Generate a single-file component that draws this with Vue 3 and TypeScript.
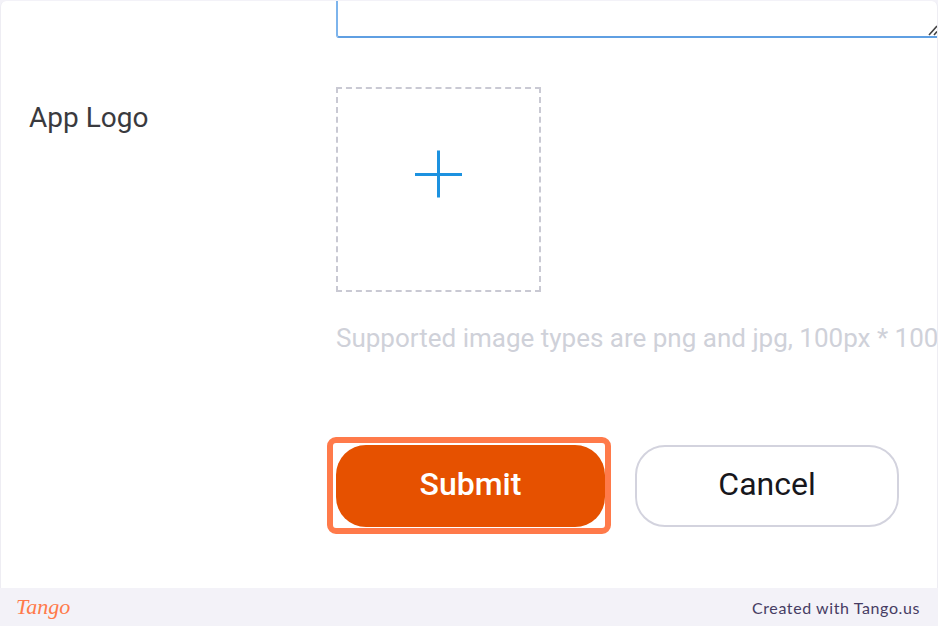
<script setup lang="ts">
const hint: string = 'Supported image types are png and jpg, 100px * 100px'
</script>

<template>
  <div class="page">
    <main class="card">
      <div class="field-tail">
        <div class="textarea">
          <svg class="grip" width="10" height="12" viewBox="0 0 10 12">
            <path d="M1 11 L9 2 M6 11 L9 7.5" stroke="#444" stroke-width="1.6" fill="none" />
          </svg>
        </div>
      </div>
      <section class="row logo-row">
        <div class="label">App Logo</div>
        <div class="control">
          <div class="upload">
            <svg width="50" height="50" viewBox="0 0 50 50">
              <path d="M24.5 1.5 V48.5 M1 25.5 H48" stroke="#1c92e0" stroke-width="3" fill="none" />
            </svg>
          </div>
          <p class="hint">{{ hint }}</p>
        </div>
      </section>
      <div class="actions">
        <button class="btn primary" type="button">
          Submit
          <span class="highlight"></span>
        </button>
        <button class="btn ghost" type="button">Cancel</button>
      </div>
    </main>
    <footer class="footer">
      <span class="logo">Tango</span>
      <span class="credit">Created with Tango.us</span>
    </footer>
  </div>
</template>

<style>
html, body { margin: 0; background: #f3f2f8; }
</style>

<style scoped>
.page {
  width: 938px;
  height: 626px;
  display: flex;
  flex-direction: column;
  overflow: hidden;
  font-family: Roboto, "Liberation Sans", sans-serif;
  background: #f3f2f8;
}
.card {
  height: 587px;
  margin-top: 1px;
  box-sizing: border-box;
  background: #fff;
  border-left: 1px solid #eeedf3;
  border-right: 1px solid #eeedf3;
  border-radius: 6px 6px 0 0;
  overflow: hidden;
}
.field-tail { padding-left: 335px; height: 37px; }
.textarea {
  position: relative;
  box-sizing: border-box;
  height: 37px;
  width: 640px;
  border-left: 2px solid #7db4ec;
  border-bottom: 2px solid #5f9fe2;
  border-bottom-left-radius: 3px;
}
.grip { position: absolute; left: 590px; top: 23px; }
.row { display: flex; padding-top: 49px; }
.label {
  width: 335px;
  padding-left: 28px;
  box-sizing: border-box;
  flex: none;
  font-size: 28px;
  line-height: 36px;
  margin-top: 13px;
  color: #3a3a3e;
}
.control { min-width: 0; white-space: nowrap; }
.upload {
  width: 205px;
  height: 205px;
  box-sizing: border-box;
  border: 2px dashed #c9c9d3;
  display: flex;
  align-items: center;
  justify-content: center;
}
.upload svg { margin-bottom: 31px; }
.hint {
  margin: 28px 0 0;
  font-size: 26px;
  line-height: 36px;
  color: #cfd1d9;
}
.actions {
  display: flex;
  gap: 30px;
  padding: 89px 0 0 335px;
}
.btn {
  position: relative;
  height: 82px;
  box-sizing: border-box;
  border-radius: 30px;
  font-family: Roboto, "Liberation Sans", sans-serif;
  font-size: 32px;
  padding: 0 0 4px;
}
.primary {
  width: 269px;
  background: #e65100;
  border: 0;
  color: #fff;
  font-weight: 500;
}
.ghost {
  width: 264px;
  background: #fff;
  border: 2px solid #d3d3de;
  color: #17171c;
}
.highlight {
  position: absolute;
  left: -9px;
  top: -8px;
  width: 284px;
  height: 97px;
  box-sizing: border-box;
  border: 6px solid #ff7a4a;
  border-radius: 9px;
}
.footer {
  flex: 1;
  display: flex;
  align-items: center;
  justify-content: space-between;
  padding: 0 18px 0 16px;
}
.logo {
  font-family: "Liberation Serif", serif;
  font-style: italic;
  font-size: 22px;
  color: #ff7a4a;
}
.credit {
  font-family: Lato, "Noto Sans", sans-serif;
  font-size: 16px;
  letter-spacing: 0.6px;
  color: #463c63;
}
</style>
